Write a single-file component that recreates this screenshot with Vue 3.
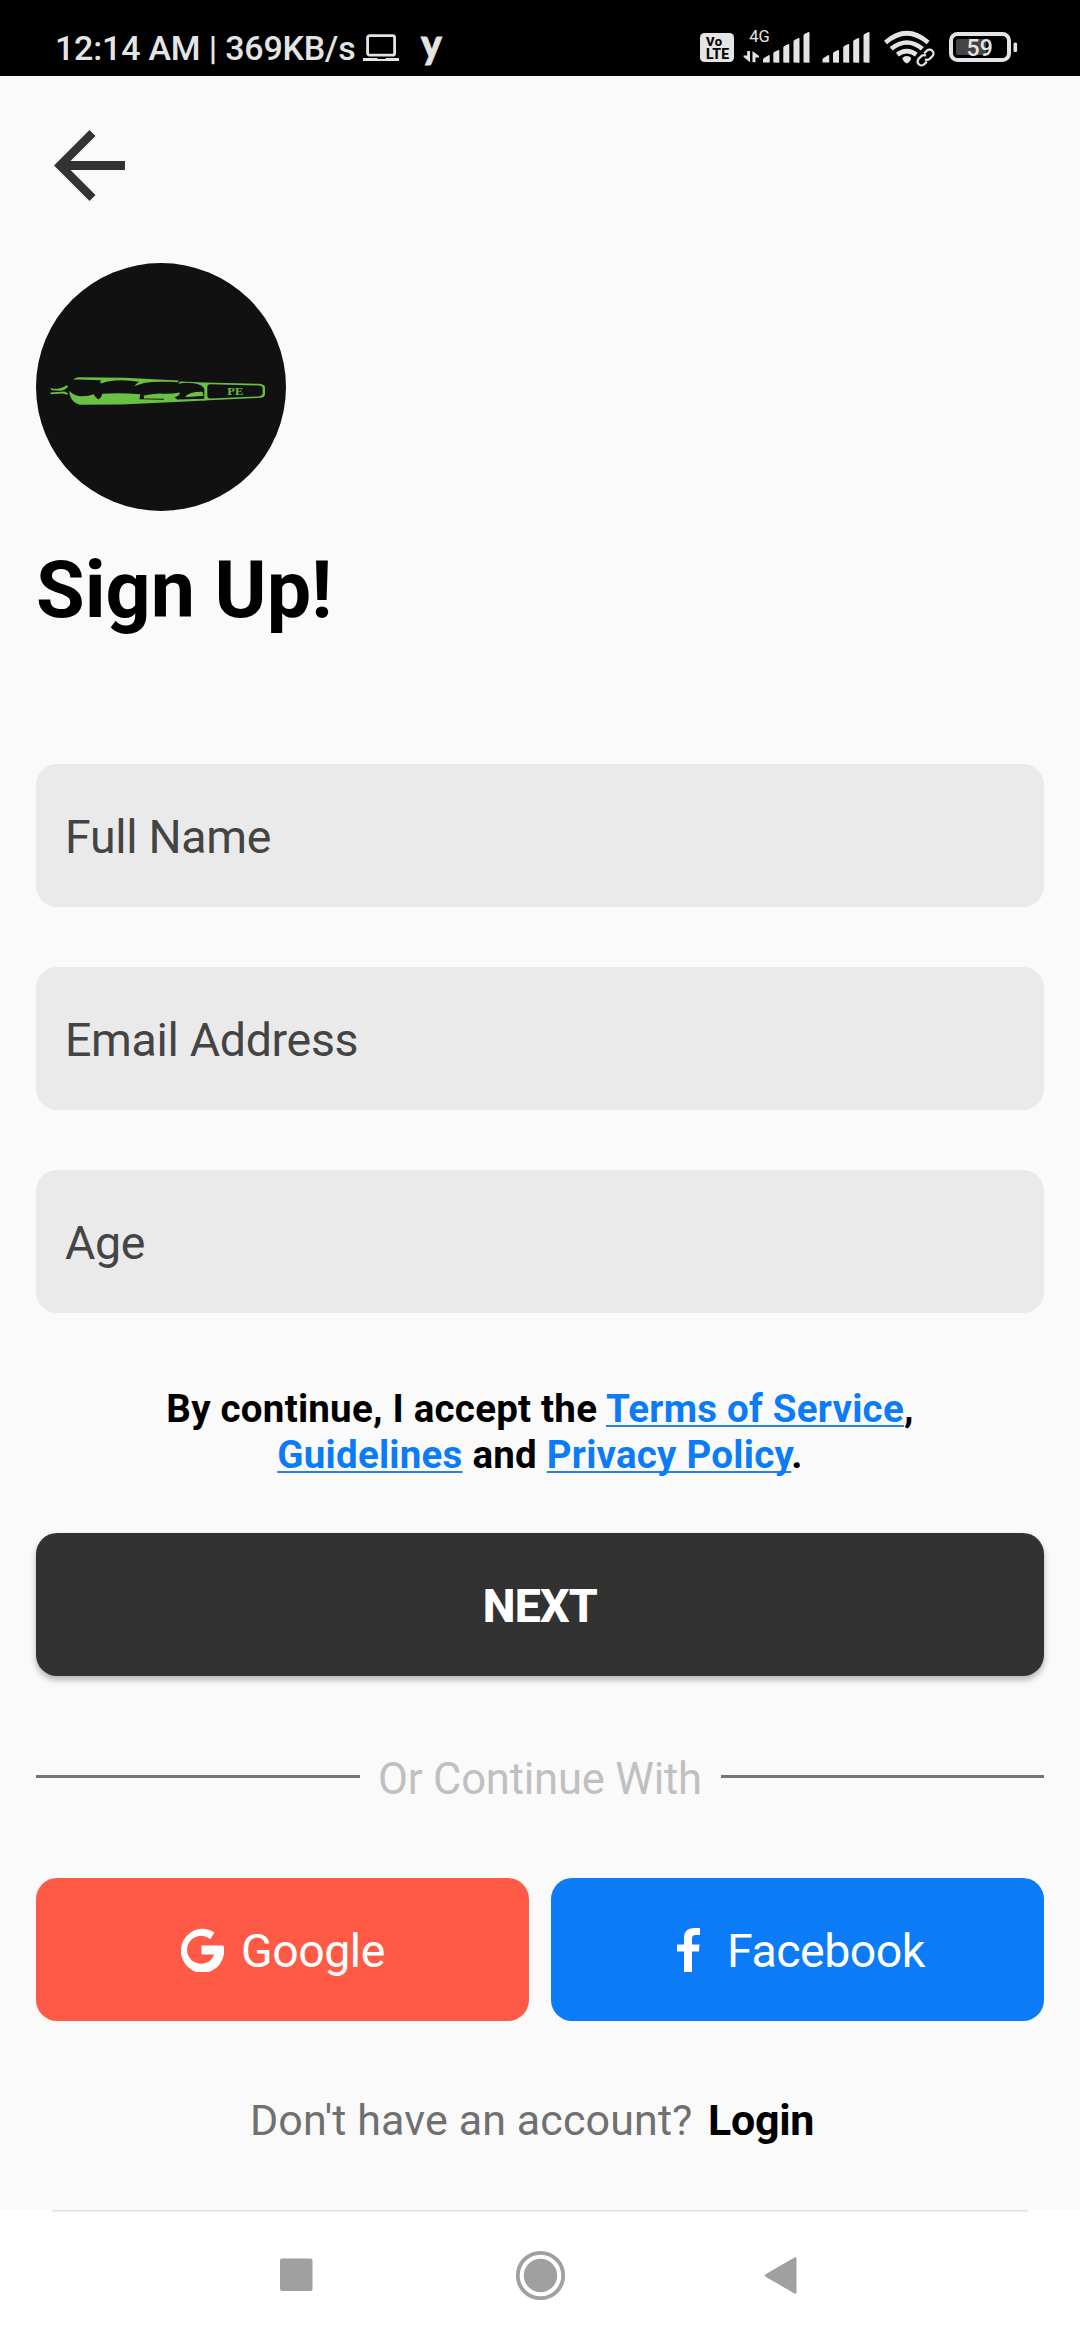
<script setup>
const fields = [
  { id: 'name', label: 'Full Name' },
  { id: 'email', label: 'Email Address' },
  { id: 'age', label: 'Age' },
]
</script>

<template>
  <div class="screen">
    <header class="status">
      <div class="status-left">
        <span class="clock">12:14 AM | 369KB/s</span>
        <svg class="laptop" width="37" height="28" viewBox="0 0 37 28">
          <rect x="4.6" y="1.6" width="27" height="19.6" rx="2" fill="none" stroke="#e4e4e4" stroke-width="2.8" />
          <path d="M0 24h14l1 1h7l1-1h13v3H0z" fill="#e4e4e4" />
        </svg>
        <span class="app-mark">y</span>
      </div>
      <svg class="status-right" width="320" height="40" viewBox="700 28 320 40">
        <g fill="#e4e4e4">
          <rect x="700" y="33" width="34" height="29" rx="4.5" />
          <path d="M763 62.6v-3q0-1 1-1.600l5-3q.7-.2.700.6v7z" />
          <path d="M773.300 62.600v-9q0-1 1-1.600l4-2q1-.3 1 .7v12zM783.300 62.600v-15q0-1 1-1.600l4-2q1-.3 1 .7v18zM793.500 62.600v-21q0-1 1-1.600l4-2q1-.3 1 .7v24zM803.500 62.600v-27q0-1 1-1.600l4-2q1-.3 1 .7v30z" />
          <path d="M822.500 62.600v-3q0-1 1-1.600l5-3q.7-.2.700.6v7zM833 62.600v-9q0-1 1-1.600l4-2q1-.3 1 .7v12zM843.200 62.600v-15q0-1 1-1.600l4-2q1-.3 1 .7v18zM853.200 62.600v-21q0-1 1-1.600l4-2q1-.3 1 .7v24zM863.500 62.600v-27q0-1 1-1.600l4-2q1-.3 1 .7v30z" />
          <path d="M747.200 51h2.800v11.200l-6.400-5.200v-1.500h3.600zM752.500 62.200V51l6.500 5v1.600h-3.500v4.600z" />
          <path d="M906.800 56q2.800 0 4.400 2-.6 3.500-4.400 5.600-3.800-2-4.400-5.600 1.600-2 4.400-2z" />
          <rect x="1013.500" y="42.500" width="3.600" height="9.500" rx="1.500" />
        </g>
        <g fill="none" stroke="#e4e4e4" stroke-width="4.600">
          <path d="M885.500 42.500q21.300-18.500 42.600 0M891.200 48.800q15.600-12.600 31.200 0M897.300 54.600q9.500-7 19 0" />
        </g>
        <g transform="rotate(-45 925.500 57.500)" fill="none">
          <rect x="914" y="51" width="23" height="13" rx="5" fill="#000" />
          <g stroke="#e4e4e4" stroke-width="2.300">
            <path d="M923.500 61.400h-3.700a3.900 3.900 0 0 1 0-7.800h3.700a3.900 3.900 0 0 1 3.600 3M927.500 53.600h3.700a3.900 3.900 0 0 1 0 7.800h-3.700a3.900 3.900 0 0 1-3.600-3" />
          </g>
        </g>
        <rect x="951" y="34" width="58" height="26" rx="6.500" fill="none" stroke="#e4e4e4" stroke-width="4" />
        <rect x="956" y="39" width="30" height="16" rx="2.500" fill="#444" />
        <text x="714" y="45.800" class="tiny" text-anchor="middle" font-size="13" textLength="16">Vo</text>
        <text x="717.500" y="58.800" class="tiny" text-anchor="middle" font-size="14" textLength="23">LTE</text>
        <text x="759.500" y="42" class="net" text-anchor="middle" font-size="16.500">4G</text>
        <text x="979.700" y="55.800" class="pct" text-anchor="middle" font-size="23">59</text>
      </svg>
    </header>

    <main class="content">
      <button class="back" aria-label="Back">
        <svg width="71" height="71" viewBox="54 130 71 71">
          <path fill="#323232" d="M54 165.500 89.500 130l6 6-25 25H125v9H70.500l25 25-6 6z" />
        </svg>
      </button>

      <svg class="logo" width="250" height="248" viewBox="48 39 750 743" preserveAspectRatio="none">
        <ellipse cx="423" cy="410.500" rx="375" ry="371.500" fill="#111112" />
        <g transform="translate(75 345)" fill="#6abf45">
          <path d="M86 44Q90 36 102 36L240 38 400 46V51L375 50Q325 48 300 53 282 58 268 63 274 55 282 50 245 43 210 46 188 48 167 55 164 51 168 45L100 43z" />
          <path d="M73 77Q85 91 105 93 130 94 146 87L152 96 160 103 168 96 172 86Q220 82 286 87L283 102 357 104V101L297 100 296 91Q320 86 345 85 375 87 405 82L402 90 389 97 397 103 480 101V106L375 111 230 118 105 119Q90 115 80 102 72 90 73 77z" />
          <path d="M16 68 24 71Q52 71 65 60L70 63Q62 75 44 77L20 75zM16 82Q38 80 58 79L70 85 66 89Q52 83 40 86L17 87z" />
        </g>
        <g transform="translate(390 345)" fill="#6abf45">
          <path fill-rule="evenodd" d="M85 56 90 49 165 52 328 56Q345 58 345 67V87Q345 96 330 98L160 106 163 98V72Q160 58 132 54 105 51 85 56zM180 57Q172 58 172 66V92Q172 100 181 100L326 94Q336 93 338 86V68Q337 62 328 61z" />
          <path d="M105 96Q115 80 157 80L161 92Q135 94 105 96z" />
        </g>
        <text x="646" y="434" class="brand" text-anchor="middle" textLength="48" lengthAdjust="spacingAndGlyphs">PE</text>
      </svg>

      <h1>Sign Up!</h1>

      <form class="form" @submit.prevent>
        <div v-for="f in fields" :key="f.id" class="field">{{ f.label }}</div>
      </form>

      <p class="terms">
        By continue, I accept the <a>Terms of Service</a>,<br />
        <a>Guidelines</a> and <a>Privacy Policy</a>.
      </p>

      <button class="next"><span>NEXT</span></button>

      <div class="divider"><i></i><span>Or Continue With</span><i></i></div>

      <div class="social">
        <button class="google">
          <svg width="44" height="44" viewBox="0 0 44 44">
            <path fill="#fff" d="M34.500 4.500 30.200 11.200A14 14 0 1 0 34.300 26.500H21.500V17.500H43.500A21.600 22 0 1 1 34.500 4.500z" />
          </svg>
          <span>Google</span>
        </button>
        <button class="facebook">
          <svg width="23" height="44" viewBox="0 0 23 44">
            <path fill="#fff" d="M23 0v7h-4.500q-3.500 0-3.500 3.500V16.500h7.500L22 23.500h-7V44H7V23.500H0v-7h7V10Q7 0 17 0z" />
          </svg>
          <span>Facebook</span>
        </button>
      </div>

      <p class="login"><span>Don't have an account?</span><b>Login</b></p>
    </main>

    <nav class="nav">
      <svg width="1080" height="130" viewBox="0 2210 1080 130">
        <rect x="52" y="2210" width="976" height="1.500" fill="#e0e0e0" />
        <g fill="#a0a0a0">
          <rect x="280" y="2258.500" width="32.500" height="32.500" rx="2" />
          <circle cx="540.500" cy="2275.500" r="16.700" />
          <path d="M796.500 2258.500v34q0 2-2 1L766 2277q-2.500-1.500 0-3l28.500-16.500q2-1 2 1z" />
        </g>
        <circle cx="540.500" cy="2275.500" r="22.700" fill="none" stroke="#a0a0a0" stroke-width="3.800" />
      </svg>
    </nav>
  </div>
</template>

<style>
body {
  margin: 0;
}
</style>

<style scoped>
.screen {
  width: 1080px;
  height: 2340px;
  display: flex;
  flex-direction: column;
  overflow: hidden;
  background: #fafafa;
  color: #000;
  font-family: Roboto, "Liberation Sans", sans-serif;
}
svg {
  display: block;
  flex: none;
}
button {
  border: 0;
  padding: 0;
  margin: 0;
  font: inherit;
  color: inherit;
  background: none;
}
.status {
  box-sizing: border-box;
  flex: none;
  height: 76px;
  padding: 20px 60px 0 55px;
  display: flex;
  justify-content: space-between;
  background: #000;
  color: #e4e4e4;
}
.status-left {
  display: flex;
  align-items: center;
  height: 56px;
}
.clock {
  width: 308px;
  font-size: 34px;
  font-weight: 500;
  line-height: 56px;
  letter-spacing: -0.2px;
  white-space: nowrap;
}
.laptop {
  margin-bottom: 1px;
}
.app-mark {
  margin: -10px 0 0 21px;
  font: 900 39px/50px Lato, sans-serif;
  -webkit-text-stroke: 0.8px #e4e4e4;
}
.status-right {
  margin-top: 8px;
}
.tiny {
  font-family: Roboto, sans-serif;
  font-weight: 800;
  fill: #000;
}
.net {
  fill: #e4e4e4;
}
.pct {
  fill: #e4e4e4;
  font-weight: 500;
}
.content {
  flex: 1;
  padding: 54px 36px 0;
  display: flex;
  flex-direction: column;
}
.back {
  align-self: flex-start;
  margin-left: 18px;
}
.logo {
  margin-top: 62px;
}
.brand {
  font: 700 31px "Liberation Serif", serif;
  fill: #6abf45;
}
h1 {
  margin: 32px 0 0;
  font-size: 79px;
  font-weight: 700;
  line-height: 94px;
}
.form {
  margin-top: 127px;
  display: flex;
  flex-direction: column;
  gap: 60px;
}
.field {
  box-sizing: border-box;
  height: 143px;
  padding: 2px 29px 0;
  display: flex;
  align-items: center;
  border-radius: 21px;
  background: #eaeaea;
  color: #444;
  font-size: 46.500px;
  letter-spacing: -0.32px;
}
.terms {
  margin: 73px 0 0;
  font-size: 38.500px;
  font-weight: 700;
  line-height: 46px;
  letter-spacing: 0.23px;
  text-align: center;
}
.terms a {
  color: #0b7bf7;
  text-decoration: underline;
  text-decoration-color: #2a82dc;
  text-decoration-thickness: 2px;
  text-underline-offset: 3px;
  text-decoration-skip-ink: none;
}
.next {
  flex: none;
  height: 143px;
  margin-top: 55px;
  border-radius: 21px;
  background: #323232;
  color: #fff;
  font-size: 46.500px;
  font-weight: 800;
  letter-spacing: -0.800px;
  box-shadow: 0 4px 6px rgba(0, 0, 0, 0.28);
}
.next span {
  display: block;
  padding-top: 3px;
}
.divider {
  margin-top: 77px;
  display: flex;
  align-items: center;
  color: #c0c0c0;
  font-size: 43.500px;
  line-height: 52px;
  letter-spacing: -0.180px;
}
.divider i {
  flex: 1;
  height: 3px;
  margin-bottom: 6px;
  background: #747474;
}
.divider span {
  width: 361px;
  padding-top: 1px;
  text-align: center;
  white-space: nowrap;
}
.social {
  display: grid;
  grid-template-columns: 493px 493px;
  gap: 22px;
  margin-top: 72px;
}
.social button {
  box-sizing: border-box;
  height: 143px;
  display: flex;
  align-items: center;
  border-radius: 21px;
  color: #fff;
  font-size: 46.500px;
  letter-spacing: -0.5px;
}
.social span {
  padding-top: 3px;
}
.google {
  gap: 17px;
  padding-left: 144px;
  background: #ff5a46;
}
.facebook {
  gap: 27px;
  padding-left: 126px;
  background: #0b7bf7;
}
.login {
  margin: 74px 0 0 214px;
  display: flex;
  font-size: 43px;
  line-height: 50px;
  color: #707070;
}
.login span {
  width: 458px;
  letter-spacing: 0.12px;
  white-space: nowrap;
}
.login b {
  color: #000;
  letter-spacing: -0.3px;
}
.nav {
  flex: none;
  height: 130px;
  background: #fff;
}
</style>
